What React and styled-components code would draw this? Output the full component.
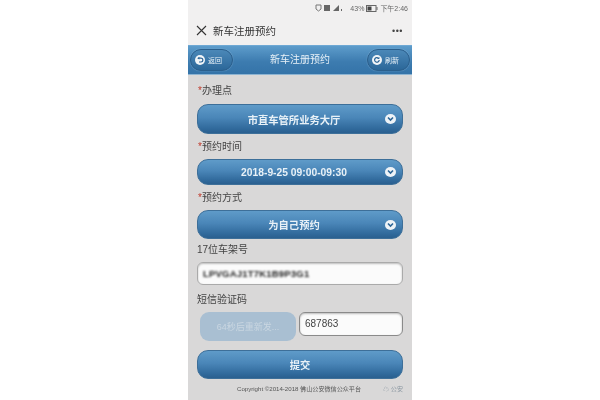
import React from "react";
import styled, { createGlobalStyle } from "styled-components";

const GlobalStyle = createGlobalStyle`
  html, body {
    margin: 0;
    padding: 0;
    background: #fff;
    width: 600px;
    height: 400px;
    overflow: hidden;
    font-family: "Liberation Sans", "Noto Sans CJK SC", sans-serif;
  }
`;

const Phone = styled.div`
  width: 224px;
  height: 400px;
  margin-left: 188px;
  background: #d9d8d8;
  display: flex;
  flex-direction: column;
  overflow: hidden;
  filter: blur(0.45px);
`;

const StatusBar = styled.div`
  height: 16px;
  background: #f1f0f0;
  display: flex;
  align-items: center;
  justify-content: flex-end;
  gap: 2px;
  padding-right: 4px;
  font-size: 7px;
  color: #666;
`;

const TitleBar = styled.div`
  height: 29px;
  background: #f1f0f0;
  display: flex;
  align-items: center;
  padding: 0 9px 0 8px;
  color: #333;
  font-size: 10.5px;
`;

const PageTitle = styled.span`
  margin-left: 6px;
  flex: 1;
`;

const Dots = styled.span`
  font-size: 9px;
  letter-spacing: 0.5px;
  color: #444;
`;

const NavBar = styled.div`
  height: 30px;
  background: linear-gradient(#5d9ccb, #3d7cb0 55%, #3473a8);
  border-top: 1px solid #6ea8d4;
  border-bottom: 1px solid #8db4d2;
  box-sizing: border-box;
  display: flex;
  align-items: center;
  justify-content: space-between;
  padding: 0 2px;
  color: #e9f2f8;
  font-size: 10px;
`;

const NavTitle = styled.span`
  margin-top: -3px;
`;

const NavButton = styled.div`
  width: 43px;
  height: 22px;
  box-sizing: border-box;
  border-radius: 11px;
  background: linear-gradient(#4b88b8, #2b6799);
  border: 1px solid #2b5f8c;
  box-shadow: 0 0 1px #9cc3e0;
  display: flex;
  align-items: center;
  gap: 3px;
  padding-left: 4px;
  font-size: 7px;
`;

const Dot = styled.span`
  width: 10px;
  height: 10px;
  border-radius: 50%;
  background: #f1f5f8;
  display: flex;
  align-items: center;
  justify-content: center;
  flex-shrink: 0;
`;

const Form = styled.div`
  flex: 1;
  display: flex;
  flex-direction: column;
  padding: 9px 9px 0;
`;

const Label = styled.div`
  font-size: 10px;
  line-height: 14px;
  height: 14px;
  color: #444;
  margin-bottom: ${(p) => p.$gap ?? 5}px;
  padding-left: ${(p) => (p.$plain ? 0 : 1)}px;
`;

const Star = styled.span`
  color: #c0392b;
`;

const BlueBar = styled.div`
  position: relative;
  height: ${(p) => p.$h}px;
  margin-bottom: ${(p) => p.$mb ?? 5}px;
  border-radius: 11px;
  background: linear-gradient(#5f9bc9, #4a86b8 45%, #30699b 85%, #2a5f8f);
  border: 1px solid #3d6f99;
  box-sizing: border-box;
  display: flex;
  align-items: center;
  justify-content: center;
  padding-right: 12px;
  color: #e8f1f7;
  font-size: 10.3px;
  font-weight: bold;
`;

const Chevron = styled.span`
  position: absolute;
  right: 6px;
  top: 50%;
  margin-top: -5px;
  width: 11px;
  height: 10px;
  border-radius: 50%;
  background: #eef3f7;
  display: flex;
  align-items: center;
  justify-content: center;
`;

const InputBox = styled.div`
  background: #fbfbfb;
  border: 1px solid #aaa;
  border-radius: 6px;
  box-shadow: inset 0 1px 2px rgba(0, 0, 0, 0.25);
  box-sizing: border-box;
  display: flex;
  align-items: center;
  color: #444;
  font-size: 10px;
`;

const VinBox = styled(InputBox)`
  height: 23px;
  padding-left: 5px;
  margin-bottom: 8px;
`;

const BlurredText = styled.span`
  filter: blur(0.9px);
  font-weight: bold;
  font-size: 9.5px;
  letter-spacing: 0.2px;
  color: #222;
`;

const CodeRow = styled.div`
  display: flex;
  align-items: flex-start;
  gap: 3px;
  margin-bottom: 9px;
  padding-left: 3px;
`;

const SendButton = styled.div`
  width: 96px;
  height: 29px;
  border-radius: 9px;
  background: #a9bfd2;
  color: #c9d6e1;
  font-size: 9px;
  display: flex;
  align-items: center;
  justify-content: center;
`;

const CodeBox = styled(InputBox)`
  flex: 1;
  height: 24px;
  padding-left: 5px;
  border-color: #8a8a8a;
  padding-bottom: 2px;
`;

const Footer = styled.div`
  display: flex;
  align-items: center;
  justify-content: space-between;
  margin-top: 5px;
  padding-left: 40px;
  font-size: 6.1px;
  color: #555;
  white-space: nowrap;
`;

const Mark = styled.span`
  color: #8a96a0;
  filter: blur(0.4px);
`;

const ChevronIcon = () => (
  <svg width="7" height="6" viewBox="0 0 7 6">
    <path d="M1 1.5 L3.5 4 L6 1.5" fill="none" stroke="#2c6596" strokeWidth="1.6" />
  </svg>
);

const BackIcon = () => (
  <svg width="8" height="8" viewBox="0 0 8 8">
    <path d="M2.5 2.2 H5 a1.9 1.9 0 0 1 0 3.8 H3" fill="none" stroke="#2b6496" strokeWidth="1.2" />
    <path d="M3.4 0.8 L1.2 2.2 L3.4 3.6 Z" fill="#2b6496" />
  </svg>
);

const RefreshIcon = () => (
  <svg width="8" height="8" viewBox="0 0 8 8">
    <path d="M6.2 4 a2.3 2.3 0 1 1 -0.8 -1.8" fill="none" stroke="#2b6496" strokeWidth="1.2" />
    <path d="M6.4 0.8 V3 H4.2 Z" fill="#2b6496" />
  </svg>
);

const CloseIcon = () => (
  <svg width="11" height="11" viewBox="0 0 11 11">
    <path d="M1 1 L10 10 M10 1 L1 10" stroke="#333" strokeWidth="1.1" />
  </svg>
);

const SignalIcons = () => (
  <svg width="33" height="8" viewBox="0 0 33 8">
    <path d="M1 1 H6 V5 L3.5 7 L1 5 Z" fill="none" stroke="#777" />
    <rect x="9" y="1" width="6" height="6" fill="#666" />
    <path d="M24 1 V7 H18 Z" fill="#666" />
    <rect x="26" y="5" width="1" height="2" fill="#666" />
  </svg>
);

const BatteryIcon = () => (
  <svg width="12" height="7" viewBox="0 0 12 7">
    <rect x="0.5" y="0.5" width="9.5" height="6" fill="none" stroke="#666" />
    <rect x="1.5" y="1.5" width="4" height="4" fill="#444" />
    <rect x="10.5" y="2" width="1" height="3" fill="#666" />
  </svg>
);

const Select = ({ h, mb, children }) => (
  <BlueBar $h={h} $mb={mb}>
    {children}
    <Chevron>
      <ChevronIcon />
    </Chevron>
  </BlueBar>
);

const SubmitBar = styled(BlueBar)`
  padding-right: 0;
`;

export default function App() {
  return (
    <>
      <GlobalStyle />
      <Phone>
        <StatusBar>
          <SignalIcons />
          <span>43%</span>
          <BatteryIcon />
          <span>下午2:46</span>
        </StatusBar>
        <TitleBar>
          <CloseIcon />
          <PageTitle>新车注册预约</PageTitle>
          <Dots>•••</Dots>
        </TitleBar>
        <NavBar>
          <NavButton>
            <Dot><BackIcon /></Dot>
            返回
          </NavButton>
          <NavTitle>新车注册预约</NavTitle>
          <NavButton>
            <Dot><RefreshIcon /></Dot>
            刷新
          </NavButton>
        </NavBar>
        <Form>
          <Label $gap={6}><Star>*</Star>办理点</Label>
          <Select h={30} mb={6}>市直车管所业务大厅</Select>
          <Label $gap={5}><Star>*</Star>预约时间</Label>
          <Select h={26} mb={6}>2018-9-25 09:00-09:30</Select>
          <Label $gap={5}><Star>*</Star>预约方式</Label>
          <Select h={29} mb={4}>为自己预约</Select>
          <Label $plain $gap={5}>17位车架号</Label>
          <VinBox><BlurredText>LPVGAJ1T7K1B9P3G1</BlurredText></VinBox>
          <Label $plain $gap={5}>短信验证码</Label>
          <CodeRow>
            <SendButton>64秒后重新发...</SendButton>
            <CodeBox>687863</CodeBox>
          </CodeRow>
          <SubmitBar $h={29} $mb={0}>提交</SubmitBar>
          <Footer>
            <span>Copyright ©2014-2018 佛山公安微信公众平台</span>
            <Mark>☁ 公安</Mark>
          </Footer>
        </Form>
      </Phone>
    </>
  );
}
